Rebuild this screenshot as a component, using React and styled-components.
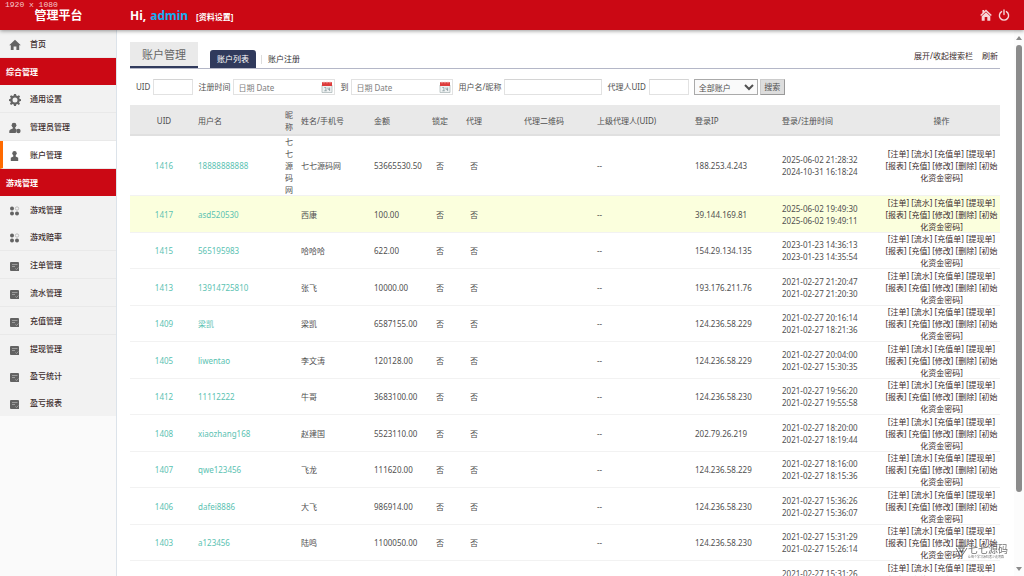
import React from 'react';
import styled, { createGlobalStyle, css } from 'styled-components';

const GlobalStyle = createGlobalStyle`
  * { box-sizing: border-box; }
  body {
    margin: 0;
    font-family: "Noto Sans", "Noto Sans CJK SC", sans-serif;
    font-size: 8px;
    line-height: 12px;
    color: #505050;
    background: #fff;
  }
  a { color: inherit; text-decoration: none; }
  input, select, button { font: inherit; color: inherit; margin: 0; }
`;

const Page = styled.div`
  height: 100vh;
  display: flex;
  flex-direction: column;
  overflow: hidden;
`;

const Header = styled.header`
  position: relative;
  z-index: 2;
  flex: none;
  height: 30px;
  display: flex;
  align-items: center;
  background: #cb0814;
  color: #fff;
  box-shadow: 0 1px 4px rgba(0, 0, 0, 0.4);
`;

const Brand = styled.h1`
  width: 117px;
  margin: 0;
  padding-top: 2px;
  text-align: center;
  font-size: 12px;
  line-height: 28px;
`;

const Greeting = styled.div`
  flex: 1;
  display: flex;
  align-items: baseline;
  gap: 4px;
  padding: 2px 0 0 13px;
  font-size: 12px;
  line-height: 28px;
  font-weight: 700;
`;

const UserName = styled.span`
  color: #12aef5;
`;

const SettingsLink = styled.a`
  font-size: 8px;
  margin-left: 4px;
`;

const HeaderIcons = styled.nav`
  display: flex;
  gap: 6px;
  padding-right: 14px;
  a { display: flex; }
`;

const Resolution = styled.span`
  position: absolute;
  left: 5px;
  top: 0;
  font-family: "Liberation Mono", monospace;
  font-size: 8px;
  line-height: 9px;
  color: #f6c9cc;
`;

const Body = styled.div`
  flex: 1;
  min-height: 0;
  display: flex;
`;

const Sidebar = styled.aside`
  flex: none;
  width: 117px;
  background: #fafafa;
  border-right: 1px solid #dce3ea;
`;

const NavHeading = styled.h2`
  margin: 0;
  padding-left: 6px;
  font-size: 8px;
  line-height: 27px;
  color: #fff;
  background: #cb0814;
`;

const NavItem = styled.a`
  display: flex;
  align-items: center;
  gap: 9px;
  height: ${(p) => (p.$line ? 28 : 27)}px;
  padding-left: 9px;
  color: #3c2d2d;
  font-weight: 500;
  background: ${(p) => (p.$active ? '#fff' : '#f2f2f2')};
  border-bottom: ${(p) => (p.$line ? '1px solid #e9e9e9' : '0')};
  ${(p) => p.$active && css`
    border-left: 3px solid #ff6a00;
    padding-left: 6px;
  `}
  svg { margin-top: 2px; }
`;

const Main = styled.main`
  flex: 1;
  min-width: 0;
  padding: 12px 14px 0 13px;
  overflow: hidden;
`;

const TitleBar = styled.div`
  display: flex;
  align-items: flex-end;
  height: 27px;
  border-bottom: 1px solid #b4b7c7;
`;

const Title = styled.h2`
  align-self: stretch;
  margin: 0 12px 0 0;
  padding: 0 12px;
  font-size: 11px;
  font-weight: 400;
  line-height: 26px;
  color: #666;
  background: #eaeaea;
  border-bottom: 2px solid #303a5c;
`;

const Tab = styled.a`
  padding: 0 7px;
  line-height: 18px;
  border-radius: 3px 3px 0 0;
  color: ${(p) => (p.$active ? '#fff' : '#333')};
  background: ${(p) => (p.$active ? '#303a5c' : 'transparent')};
`;

const TabDivider = styled.span`
  width: 1px;
  height: 9px;
  margin: 0 -1px 4px 5px;
  background: #ddd;
`;

const TitleActions = styled.div`
  flex: 1;
  display: flex;
  justify-content: flex-end;
  gap: 9px;
  padding-right: 2px;
  line-height: 24px;
  color: #3c2d2d;
`;

const SearchForm = styled.form`
  display: flex;
  align-items: center;
  gap: 5px;
  margin: 10px 0;
  padding-left: 6px;
`;

const Field = styled.label`
  display: flex;
  align-items: center;
  gap: 3px;
  white-space: nowrap;
`;

const TextInput = styled.input`
  width: ${(p) => p.$width}px;
  height: 16px;
  padding: 0 4px;
  border: 1px solid #e2e2e2;
  border-top-color: #d4d4d4;
  background: #fff;
  outline: 0;
  &::placeholder { color: #808080; }
`;

const DateBox = styled.span`
  display: flex;
  align-items: center;
  width: 102px;
  height: 16px;
  padding-right: 1px;
  border: 1px solid #e2e2e2;
  input { flex: 1; min-width: 0; border: 0; height: 14px; }
`;

const AccountSelect = styled.select`
  width: 64px;
  height: 16px;
  padding: 0;
  border: 1px solid #aaa;
  border-radius: 0;
  background: #fafafa;
`;

const SearchButton = styled.button`
  width: 25px;
  height: 16px;
  margin-left: -3px;
  padding: 0;
  border: 1px solid #ccc;
  border-right-color: #999;
  border-bottom-color: #999;
  background: #ddd;
`;

const Table = styled.table`
  width: 100%;
  table-layout: fixed;
  border-collapse: collapse;
`;

const HeadRow = styled.tr`
  height: 31px;
  background: #e9e9e9;
  box-shadow: inset 0 -2px #e0e0e0;
`;

const cell = css`
  padding: 0 ${(p) => (p.$flush ? 0 : 4)}px 0 0;
  text-align: ${(p) => (p.$center ? 'center' : 'left')};
  font-weight: 400;
  vertical-align: middle;
`;

const Th = styled.th`${cell}`;
const Td = styled.td`${cell}`;

const Row = styled.tr`
  height: 36px;
  background: ${(p) => (p.$hover ? '#fbffdd' : '#fff')};
  box-shadow: inset 0 -1px #f2f2f2;
  &:nth-child(even) { height: 37px; }
`;

const TealLink = styled.a`
  color: #5bc2b2;
`;

const ActionLink = styled.a`
  color: #3c2d2d;
`;

const ScrollTrack = styled.div`
  flex: none;
  width: 10px;
  display: flex;
  flex-direction: column;
  align-items: center;
  padding: 6px 0 5px;
  background: #fcfcfc;
`;

const ScrollThumb = styled.div`
  flex: 447;
  width: 6px;
  margin-top: 5px;
  border-radius: 3px;
  background: #8b8b8b;
`;

const ScrollRest = styled.div`
  flex: 75;
`;

const Watermark = styled.div`
  position: fixed;
  right: 16px;
  bottom: 17px;
  display: flex;
  align-items: center;
  color: #555;
  opacity: 0.85;
`;

const WatermarkText = styled.div`
  display: flex;
  flex-direction: column;
  font-size: 10px;
  line-height: 11px;
  small { font-size: 3px; line-height: 4px; }
`;

const HomeIcon = ({ color, size }) => (
  <svg width={size} height={size} viewBox="0 0 12 12" fill={color}>
    <path d="M6 .4 11.8 6l-1 1L6 2.4 1.2 7l-1-1 2.200-2.100V1h1.700v1.300z" />
    <path d="M6 3.200 10.300 7.200v4.600H7.300V8H4.700v3.800H1.700V7.200z" />
  </svg>
);

const PowerIcon = () => (
  <svg width="12" height="12" viewBox="0 0 12 12" fill="none" stroke="#f7d5d7" strokeWidth="1.4" strokeLinecap="round">
    <path d="M3.6 2.6a4.6 4.6 0 1 0 4.8 0M6 1v4.6" />
  </svg>
);

const icons = {
  home: <path d="M6 .8 11.8 6.2h-1.6V11H7.4V7.6H4.6V11H1.8V6.2H.2z" />,
  gear: (
    <path fillRule="evenodd" d="M5 0h2l.3 1.6 1.2.5L9.9 1.2l1.200 1.200-.9 1.400.5 1.200L12 5.200v1.700l-1.400.3-.5 1.200.9 1.400-1.200 1.200-1.400-.9-1.200.5L7 12H5l-.3-1.400-1.200-.5-1.400.9L.9 9.800l.9-1.400-.5-1.200L0 6.900V5.200L1.300 5l.5-1.200-.9-1.400 1.200-1.200 1.400.9 1.200-.5zM6 3.500a2.500 2.500 0 1 0 0 5 2.500 2.500 0 0 0 0-5z" />
  ),
  users: (
    <g>
      <circle cx="5" cy="3.2" r="2.4" />
      <path d="M3.800 5h2.400v1.500c.8.300 1.300.7 1.300 1.500L6.700 11H.3V9c0-1.500 1.900-2 3.500-2.600z" />
      <circle cx="9.400" cy="9" r="2.200" />
    </g>
  ),
  user: (
    <g>
      <circle cx="5.500" cy="3.300" r="2.200" />
      <path d="M4.300 5h2.400v1.600l2.500 1.200V11H1.800V7.800l2.500-1.200z" />
    </g>
  ),
  grid: (
    <g>
      <circle cx="3" cy="3.500" r="2" />
      <circle cx="8" cy="3.500" r="1.700" fill="none" stroke="#aaa" strokeWidth=".7" />
      <circle cx="3" cy="8.500" r="2" />
      <circle cx="8" cy="8.500" r="2" />
    </g>
  ),
  list: (
    <g>
      <path d="M2 2h7a1 1 0 0 1 1 1v8H2a1 1 0 0 1-1-1V3a1 1 0 0 1 1-1z" />
      <path d="M3 4.500h5.500M3 6.500h3M6.400 8.500l1.200 1 1.800-2" stroke="#b5b5b5" strokeWidth=".7" fill="none" />
    </g>
  ),
};

const NavIcon = ({ name }) => (
  <svg width="12" height="12" viewBox="0 0 12 12" fill="#636363">{icons[name]}</svg>
);

const CalendarIcon = () => (
  <svg width="12" height="12" viewBox="0 0 12 12">
    <path d="M1 4h10v7.500H1z" fill="#eef1f2" stroke="#a5b1b3" strokeWidth=".7" />
    <path d="M1 1.200h10V5H1z" fill="#dd3b3b" />
    <path d="M3 .5v2M6 .5v2M9 .5v2" stroke="#f3b5b5" strokeWidth=".7" />
    <path d="M3.300 6.500h1.600v3.300M3.300 9.800h2.400M7 6.500v1.800h2M8.600 6.500v3.500" stroke="#7d9095" strokeWidth=".7" fill="none" />
  </svg>
);

const nav = [
  { label: '首页', icon: 'home', line: true },
  { heading: '综合管理' },
  { label: '通用设置', icon: 'gear', line: true },
  { label: '管理员管理', icon: 'users', line: true },
  { label: '账户管理', icon: 'user', line: true, active: true },
  { heading: '游戏管理' },
  { label: '游戏管理', icon: 'grid' },
  { label: '游戏赔率', icon: 'grid', line: true },
  { label: '注单管理', icon: 'list', line: true },
  { label: '流水管理', icon: 'list', line: true },
  { label: '充值管理', icon: 'list', line: true },
  { label: '提现管理', icon: 'list' },
  { label: '盈亏统计', icon: 'list' },
  { label: '盈亏报表', icon: 'list' },
];

const columns = [
  { title: 'UID', width: 68, center: true, flush: true },
  { title: '用户名', width: 87 },
  { title: '昵称', width: 16 },
  { title: '姓名/手机号', width: 73 },
  { title: '金额', width: 53 },
  { title: '锁定', width: 30, center: true },
  { title: '代理', width: 38, center: true },
  { title: '代理二维码', width: 102, center: true },
  { title: '上级代理人(UID)', width: 98 },
  { title: '登录IP', width: 87 },
  { title: '登录/注册时间', width: 101 },
  { title: '操作', width: 117, center: true, flush: true },
];

const accounts = [
  ['1416', '18888888888', '七七源码网', '七七源码网', '53665530.50', '188.253.4.243', '2025-06-02 21:28:32', '2024-10-31 16:18:24'],
  ['1417', 'asd520530', '', '西康', '100.00', '39.144.169.81', '2025-06-02 19:49:30', '2025-06-02 19:49:11'],
  ['1415', '565195983', '', '哈哈哈', '622.00', '154.29.134.135', '2023-01-23 14:36:13', '2023-01-23 14:35:54'],
  ['1413', '13914725810', '', '张飞', '10000.00', '193.176.211.76', '2021-02-27 21:20:47', '2021-02-27 21:20:30'],
  ['1409', '梁凯', '', '梁凯', '6587155.00', '124.236.58.229', '2021-02-27 20:16:14', '2021-02-27 18:21:36'],
  ['1405', 'liwentao', '', '李文涛', '120128.00', '124.236.58.229', '2021-02-27 20:04:00', '2021-02-27 15:30:35'],
  ['1412', '11112222', '', '牛哥', '3683100.00', '124.236.58.230', '2021-02-27 19:56:20', '2021-02-27 19:55:58'],
  ['1408', 'xiaozhang168', '', '赵建国', '5523110.00', '202.79.26.219', '2021-02-27 18:20:00', '2021-02-27 18:19:44'],
  ['1407', 'qwe123456', '', '飞龙', '111620.00', '124.236.58.229', '2021-02-27 18:16:00', '2021-02-27 18:15:36'],
  ['1406', 'dafei8886', '', '大飞', '986914.00', '124.236.58.230', '2021-02-27 15:36:26', '2021-02-27 15:36:07'],
  ['1403', 'a123456', '', '陆鸣', '1100050.00', '124.236.58.230', '2021-02-27 15:31:29', '2021-02-27 15:26:14'],
  ['', '', '', '', '', '', '2021-02-27 15:31:26', ''],
];

const actions = ['注单', '流水', '充值单', '提现单', '报表', '充值', '修改', '删除', '初始化资金密码'];

function AccountRow({ data, hover }) {
  const [uid, user, nick, name, amount, ip, login, registered] = data;
  const flag = uid ? '否' : '';
  return (
    <Row $hover={hover}>
      <Td $center $flush><TealLink href="#">{uid}</TealLink></Td>
      <Td><TealLink href="#">{user}</TealLink></Td>
      <Td>{nick}</Td>
      <Td>{name}</Td>
      <Td>{amount}</Td>
      <Td $center>{flag}</Td>
      <Td $center>{flag}</Td>
      <Td />
      <Td>{uid && '--'}</Td>
      <Td>{ip}</Td>
      <Td>{login}<br />{registered || '\u00a0'}</Td>
      <Td $center $flush>
        {actions.map((a) => (
          <React.Fragment key={a}><ActionLink href="#">[{a}]</ActionLink>{' '}</React.Fragment>
        ))}
      </Td>
    </Row>
  );
}

function DateField({ label }) {
  return (
    <Field>
      {label}
      <DateBox>
        <TextInput placeholder="日期 Date" />
        <CalendarIcon />
      </DateBox>
    </Field>
  );
}

export default function App() {
  return (
    <Page>
      <GlobalStyle />
      <Header>
        <Resolution>1920 x 1080</Resolution>
        <Brand>管理平台</Brand>
        <Greeting>
          <span>Hi,</span>
          <UserName>admin</UserName>
          <SettingsLink href="#">[资料设置]</SettingsLink>
        </Greeting>
        <HeaderIcons>
          <a href="#" aria-label="首页"><HomeIcon color="#f7d5d7" size={12} /></a>
          <a href="#" aria-label="退出"><PowerIcon /></a>
        </HeaderIcons>
      </Header>
      <Body>
        <Sidebar>
          {nav.map((n, i) => n.heading ? (
            <NavHeading key={i}>{n.heading}</NavHeading>
          ) : (
            <NavItem key={i} href="#" $line={n.line} $active={n.active}>
              <NavIcon name={n.icon} />
              <span>{n.label}</span>
            </NavItem>
          ))}
        </Sidebar>
        <Main>
          <TitleBar>
            <Title>账户管理</Title>
            <Tab href="#" $active>账户列表</Tab>
            <TabDivider />
            <Tab href="#">账户注册</Tab>
            <TitleActions>
              <a href="#">展开/收起搜索栏</a>
              <a href="#">刷新</a>
            </TitleActions>
          </TitleBar>
          <SearchForm>
            <Field>UID<TextInput $width={40} /></Field>
            <DateField label="注册时间" />
            <DateField label="到" />
            <Field>用户名/昵称<TextInput $width={98} /></Field>
            <Field>代理人UID<TextInput $width={40} /></Field>
            <AccountSelect aria-label="账户类型"><option>全部账户</option></AccountSelect>
            <SearchButton type="button">搜索</SearchButton>
          </SearchForm>
          <Table>
            <colgroup>
              {columns.map((c) => <col key={c.title} width={c.width} />)}
            </colgroup>
            <thead>
              <HeadRow>
                {columns.map((c) => (
                  <Th key={c.title} $center={c.center} $flush={c.flush}>{c.title}</Th>
                ))}
              </HeadRow>
            </thead>
            <tbody>
              {accounts.map((a, i) => <AccountRow key={i} data={a} hover={i === 1} />)}
            </tbody>
          </Table>
        </Main>
        <ScrollTrack>
          <svg width="6" height="4" viewBox="0 0 6 4" fill="#8b8b8b"><path d="M3 0 6 4H0z" /></svg>
          <ScrollThumb />
          <ScrollRest />
          <svg width="6" height="4" viewBox="0 0 6 4" fill="#8b8b8b"><path d="M0 0h6L3 4z" /></svg>
        </ScrollTrack>
      </Body>
      <Watermark>
        <svg width="13" height="13" viewBox="0 0 13 13" fill="none" stroke="#555" strokeWidth="1">
          <path d="M1 1h11M1 3l5 9 6-9M3 3h7M4.500 3l2 5 2-5M4 6h5" />
        </svg>
        <WatermarkText>
          七七源码
          <small>让每个学习源码者少走弯路</small>
        </WatermarkText>
      </Watermark>
    </Page>
  );
}
